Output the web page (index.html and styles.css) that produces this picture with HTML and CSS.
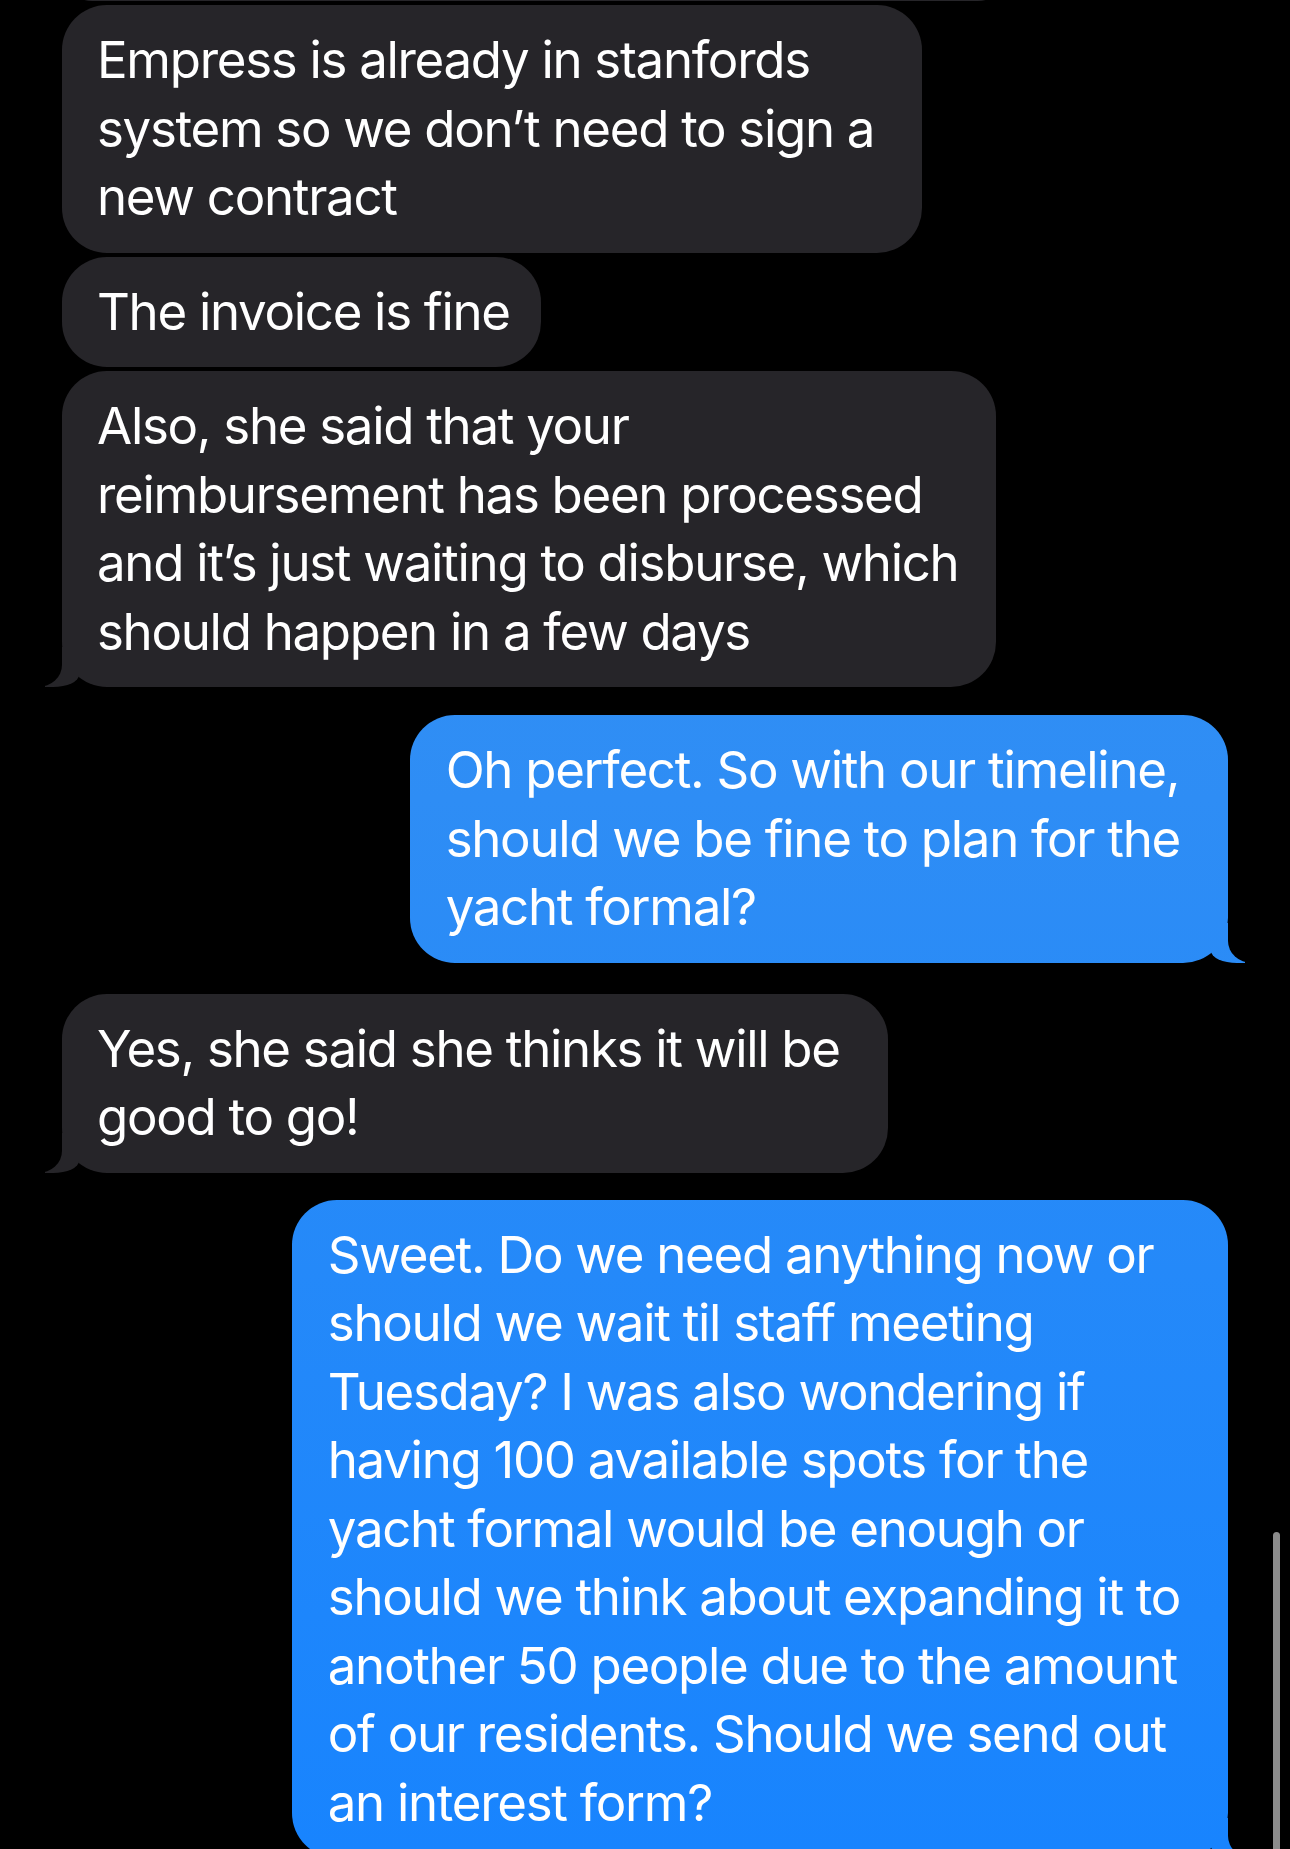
FILE: index.html
```html
<!DOCTYPE html>
<html lang="en">
<head>
<meta charset="utf-8">
<title>Messages</title>
<link rel="stylesheet" href="styles.css">
</head>
<body>
<div class="thread">
  <div class="bubble them prev"></div>
  <div class="bubble them">Empress is already in stanfords<br>system so we don’t need to sign a<br>new contract</div>
  <div class="bubble them snugger">The invoice is fine</div>
  <div class="bubble them tail snug">Also, she said that your<br>reimbursement has been processed<br>and it’s just waiting to disburse, which<br>should happen in a few days</div>
  <div class="bubble me tail switch">Oh perfect. So with our timeline,<br>should we be fine to plan for the<br>yacht formal?</div>
  <div class="bubble them tail switch2">Yes, she said she thinks it will be<br>good to go!</div>
  <div class="bubble me tail switch3">Sweet. Do we need anything now or<br>should we wait til staff meeting<br>Tuesday? I was also wondering if<br>having 100 available spots for the<br>yacht formal would be enough or<br>should we think about expanding it to<br>another 50 people due to the amount<br>of our residents. Should we send out<br>an interest form?</div>
</div>
<div class="scroll-indicator"></div>
</body>
</html>
```

FILE: styles.css
```css
html, body {
  margin: 0;
  padding: 0;
  height: 1849px;
  overflow: hidden;
  background: #000;
}

body {
  position: relative;
  font-family: "Inter", "Noto Sans", sans-serif;
  color: #fff;
}

.thread {
  display: flex;
  flex-direction: column;
  gap: 4px;
  padding: 0 62px 0 62px;
}

.bubble {
  position: relative;
  box-sizing: border-box;
  width: fit-content;
  padding: 21px 48px 21px 35px;
  font-size: 51px;
  line-height: 68.5px;
  letter-spacing: -1.3px;
  white-space: nowrap;
  border-radius: 45px;
}

.snug {
  padding-right: 38px;
}

.snugger {
  padding-right: 31px;
}

.them {
  align-self: flex-start;
  background: #262529;
}

.me {
  align-self: flex-end;
  padding-left: 36px;
  background: linear-gradient(to bottom, #3a94f0 0px, #2e8df5 800px, #1884fe 1849px) fixed;
}

.prev {
  width: 946px;
  height: 60px;
  margin-top: -59px;
}

.switch { margin-top: 24px; }
.switch2 { margin-top: 27px; }
.switch3 { margin-top: 23px; }

/* tails */
.tail::before,
.tail::after {
  content: "";
  position: absolute;
  bottom: 0;
}

.them.tail::before {
  left: -17px;
  width: 34px;
  height: 40px;
  background: #262529;
  border-bottom-right-radius: 26px 12px;
}

.them.tail::after {
  left: -42px;
  width: 42px;
  height: 40px;
  background: #000;
  border-bottom-right-radius: 24px 22px;
}

.me.tail::before {
  right: -17px;
  width: 34px;
  height: 40px;
  background: linear-gradient(to bottom, #3a94f0 0px, #2e8df5 800px, #1884fe 1849px) fixed;
  border-bottom-left-radius: 26px 12px;
}

.me.tail::after {
  right: -42px;
  width: 42px;
  height: 40px;
  background: #000;
  border-bottom-left-radius: 24px 22px;
}

.scroll-indicator {
  position: absolute;
  left: 1273px;
  top: 1532px;
  width: 7px;
  height: 340px;
  border-radius: 4px;
  background: #8c8c8c;
}
```
